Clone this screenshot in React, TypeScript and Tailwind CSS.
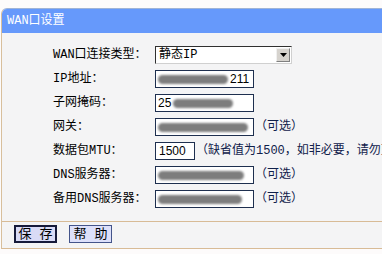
const font = "font-['Liberation_Mono','Noto_Sans_CJK_SC',monospace]";

const Blob = ({ w, ml = 0 }: { w: number; ml?: number }) => (
  <span
    className="inline-block h-[9px] shrink-0 rounded-full bg-[#7d7d7d] blur-[1px]"
    style={{ width: w, marginLeft: ml }}
  />
);

const TextBox = ({
  width = 99,
  children,
}: {
  width?: number;
  children: React.ReactNode;
}) => (
  <div
    className="flex h-[18px] shrink-0 items-center overflow-hidden border border-[#1e2f4f] bg-white px-[2px] font-['Liberation_Sans',sans-serif] text-[12px] text-black"
    style={{ width }}
  >
    {children}
  </div>
);

const Hint = ({ children }: { children: React.ReactNode }) => (
  <span className="ml-[1px] whitespace-nowrap text-[12px] text-[#10204a]">{children}</span>
);

const Row = ({
  label,
  tall = false,
  children,
}: {
  label: string;
  tall?: boolean;
  children: React.ReactNode;
}) => (
  <div className={`flex items-center pl-[51px] ${tall ? "h-[25px]" : "h-6"}`}>
    <span className="w-[102px] shrink-0 whitespace-nowrap text-[12px] text-black">{label}</span>
    <div className="flex items-center">{children}</div>
  </div>
);

export default function App() {
  return (
    <div className={`h-[254px] w-[382px] overflow-hidden bg-[#fdfbfb] ${font}`}>
      <div className="h-2" />
      <div className="ml-px overflow-hidden rounded-tl-[6px] border-l border-t border-[#d8bf9c] border-t-[#9fb3d6]">
        <div className="flex h-6 items-center bg-[#6699fb] pl-[5px] text-[12px] text-white">WAN口设置</div>
        <div className="bg-[#f4f4f5] pb-[10px] pt-[9px]">
          <Row label="WAN口连接类型：" tall>
            <div className="flex h-[18px] w-[137px] items-center justify-between border border-[#d0d0d0] border-l-[#303030] border-t-[#303030] bg-white pl-[3px] pr-px text-[12px] text-black">
              <span>静态IP</span>
              <span className="flex h-[14px] w-[14px] items-center justify-center border border-[#808080] border-l-[#f0f0f0] border-t-[#f0f0f0] bg-[#d6d3ce]">
                <svg width="7" height="4" viewBox="0 0 7 4">
                  <path d="M0 0h7L3.5 4z" fill="#000" />
                </svg>
              </span>
            </div>
          </Row>
          <Row label="IP地址：">
            <TextBox>
              <Blob w={70} />
              <span className="ml-[2px]">211</span>
            </TextBox>
          </Row>
          <Row label="子网掩码：">
            <TextBox>
              <span>25</span>
              <Blob w={60} ml={2} />
            </TextBox>
          </Row>
          <Row label="网关：">
            <TextBox>
              <Blob w={90} />
            </TextBox>
            <Hint>（可选）</Hint>
          </Row>
          <Row label="数据包MTU：">
            <TextBox width={40}>
              <span className="pl-px">1500</span>
            </TextBox>
            <Hint>（缺省值为1500，如非必要，请勿更改）</Hint>
          </Row>
          <Row label="DNS服务器：">
            <TextBox>
              <Blob w={86} />
            </TextBox>
            <Hint>（可选）</Hint>
          </Row>
          <Row label="备用DNS服务器：">
            <TextBox>
              <Blob w={84} />
            </TextBox>
            <Hint>（可选）</Hint>
          </Row>
        </div>
        <div className="flex h-7 items-start border-b border-t border-[#d8bb96] bg-[#f4f4f5] pl-[12px] pt-[3px]">
          <button className="h-[18px] w-[43px] border-2 border-[#161a3a] bg-[#d9dbf6] text-[13px] leading-none text-black">
            保 存
          </button>
          <button className="ml-[12px] h-[18px] w-[43px] border border-[#44548a] bg-[#dde0fa] text-[13px] leading-none text-black">
            帮 助
          </button>
        </div>
      </div>
    </div>
  );
}
